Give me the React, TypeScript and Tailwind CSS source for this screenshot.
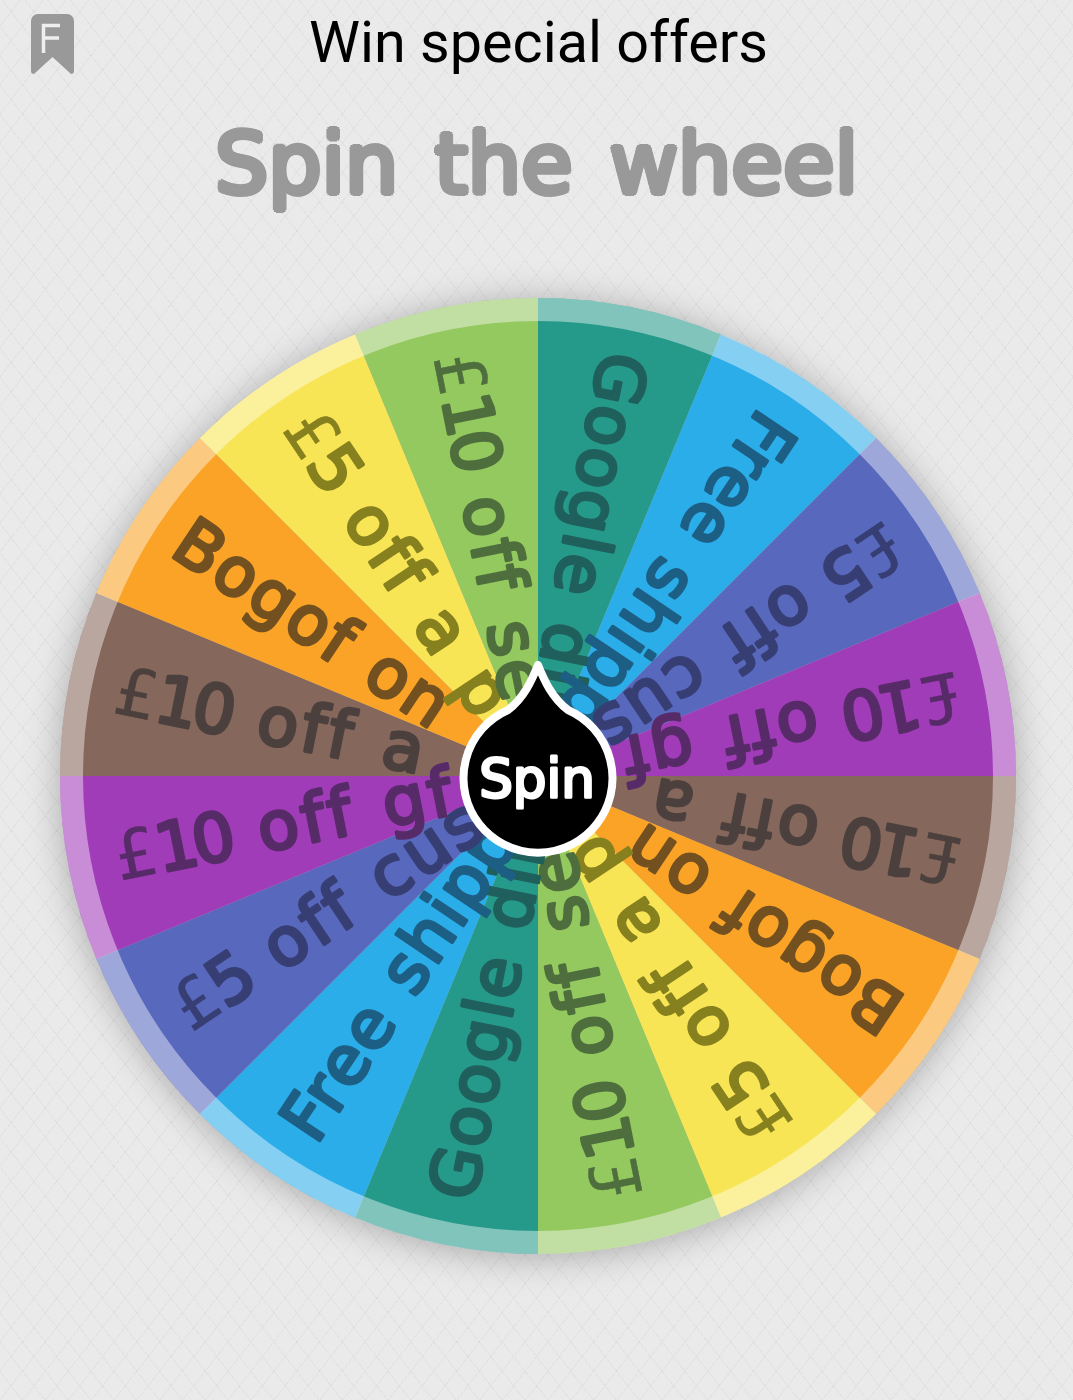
const CX = 490;
const CY = 490;
const R = 478;

const segs = [
  { fill: "#269a8a", ink: "#1f5f5c", label: "Google dir" },
  { fill: "#2bade9", ink: "#1d5f84", label: "Free shipp" },
  { fill: "#5868bd", ink: "#363e73", label: "£5 off cus" },
  { fill: "#a03cb8", ink: "#572a68", label: "£10 off gf" },
  { fill: "#85675b", ink: "#4b403d", label: "£10 off a" },
  { fill: "#faa326", ink: "#735020", label: "Bogof on" },
  { fill: "#f8e555", ink: "#86801f", label: "£5 off a p" },
  { fill: "#94c95f", ink: "#4f6e3d", label: "£10 off se" },
];
const all = [...segs, ...segs];

function pt(r: number, deg: number) {
  const a = ((deg - 90) * Math.PI) / 180;
  return [CX + r * Math.cos(a), CY + r * Math.sin(a)];
}

function wedge(i: number) {
  const s = i * 22.5;
  const [x1, y1] = pt(R, s);
  const [x2, y2] = pt(R, s + 22.5);
  return `M${CX} ${CY}L${x1} ${y1}A${R} ${R} 0 0 1 ${x2} ${y2}Z`;
}

function Label({ text }: { text: string }) {
  const m = text.match(/^£(\d+)(.*)$/);
  if (!m) return <tspan letterSpacing={2}>{text}</tspan>;
  return (
    <>
      <tspan strokeWidth={0.5} letterSpacing={-1}>£</tspan>
      <tspan letterSpacing={-5}>{m[1]}</tspan>
      <tspan letterSpacing={3.5}>{m[2]}</tspan>
    </>
  );
}

function Wheel() {
  const hy = CY + 2;
  return (
    <svg width="980" height="980" viewBox="0 0 980 980" className="overflow-visible drop-shadow-[0_3px_18px_rgba(0,0,0,0.28)]">
      {all.map((s, i) => (
        <path key={i} d={wedge(i)} fill={s.fill} />
      ))}
      <circle cx={CX} cy={CY} r={466.5} fill="none" stroke="#ffffff" strokeOpacity={0.42} strokeWidth={23} />
      {all.map((s, i) => {
        const mid = i * 22.5 + 11.25;
        return (
          <text
            key={i}
            transform={`rotate(${mid - 270} ${CX} ${CY})`}
            x={CX - 431}
            y={CY + 21}
            fill={s.ink}
            stroke={s.ink}
            strokeWidth={3.5}
            strokeLinejoin="round"
            strokeLinecap="round"
            fontFamily="'DejaVu Sans', sans-serif"
            fontSize={67}
            wordSpacing={4}
          >
            <Label text={s.label} />
          </text>
        );
      })}
      <path
        d={`M${CX} ${hy - 113} C${CX + 6} ${hy - 98} ${CX + 14} ${hy - 80} ${CX + 30} ${hy - 68} A74.500 74.500 0 1 1 ${CX - 30} ${hy - 68} C${CX - 14} ${hy - 80} ${CX - 6} ${hy - 98} ${CX} ${hy - 113} Z`}
        fill="#000000"
        stroke="#ffffff"
        strokeWidth={8}
        strokeLinejoin="round"
      />
      <text
        x={CX - 1}
        y={511}
        textAnchor="middle"
        fill="#ffffff"
        stroke="#ffffff"
        strokeWidth={3}
        strokeLinejoin="round"
        fontFamily="'DejaVu Sans', sans-serif"
        fontSize={53}
      >
        Spin
      </text>
    </svg>
  );
}

export default function App() {
  return (
    <div className="w-[1073px] h-[1400px] overflow-hidden flex flex-col bg-[#eaeaea] bg-[repeating-linear-gradient(52deg,transparent_0_17px,rgba(0,0,0,0.035)_17px_18px),repeating-linear-gradient(-52deg,transparent_0_17px,rgba(0,0,0,0.035)_17px_18px)]">
      <div className="flex items-start h-[86px]">
        <svg width="43" height="60" viewBox="0 0 43 60" className="ml-[31px] mt-[14px] shrink-0">
          <path d="M7 0H36A7 7 0 0 1 43 7V57Q43 60 40 60L21.500 43L3 60Q0 60 0 57V7A7 7 0 0 1 7 0Z" fill="#999999" />
          <path d="M12.500 39V11.500H29M12.500 24H28" fill="none" stroke="#eeeeee" strokeWidth="3.500" />
        </svg>
        <div className="flex-1 text-center pr-[70px] text-[57.500px] leading-[86px] text-black font-['Roboto',sans-serif]">
          Win special offers
        </div>
      </div>
      <div className="text-center h-[120px] text-[#999999] text-[84px] leading-[156px] font-['DejaVu_Sans',sans-serif] [word-spacing:10px] [text-shadow:3px_0_#999999,-3px_0_#999999,0_3px_#999999,0_-3px_#999999,2.100px_2.100px_#999999,-2.100px_2.100px_#999999,2.100px_-2.100px_#999999,-2.100px_-2.100px_#999999]">
        Spin the wheel
      </div>
      <div className="flex justify-center mt-[80px] pl-[3px]">
        <Wheel />
      </div>
    </div>
  );
}
